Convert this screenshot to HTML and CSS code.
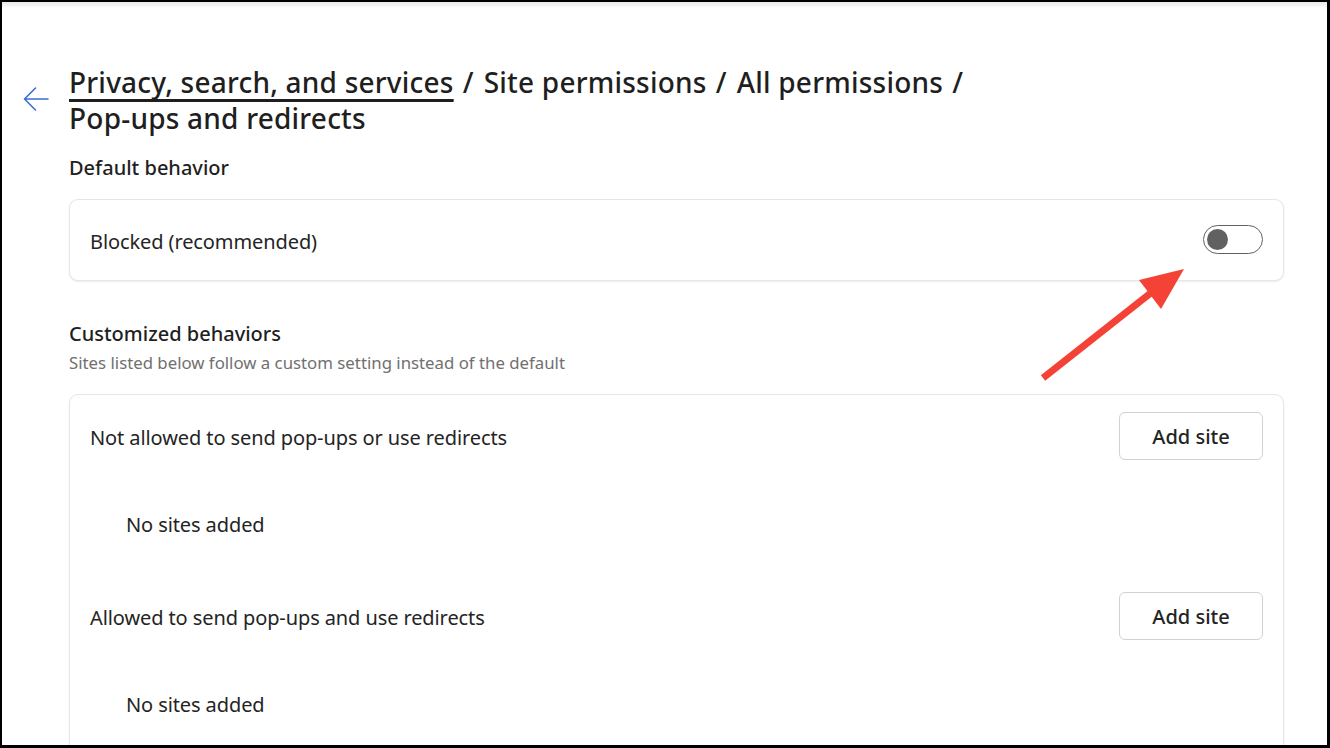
FILE: index.html
```html
<!DOCTYPE html>
<html lang="en">
<head>
<meta charset="utf-8">
<title>Pop-ups and redirects</title>
<link rel="stylesheet" href="styles.css">
</head>
<body>
<div class="frame">
  <div class="topband"></div>
  <div class="main">
    <div class="back-col">
      <svg class="back" width="28" height="26" viewBox="0 0 28 26" aria-hidden="true">
        <path d="M26 13 H2.5 M13.5 2 L2.5 13 L13.5 24" fill="none" stroke="#3b6fd6" stroke-width="1.6" stroke-linecap="round" stroke-linejoin="round"/>
      </svg>
    </div>
    <div class="content">
      <h1 class="crumbs"><span class="crumb-link">Privacy, search, and services</span><span class="sep">/</span>Site permissions<span class="sep">/</span>All permissions<span class="sep">/</span><br>Pop-ups and redirects</h1>

      <h2 class="section-title first">Default behavior</h2>
      <div class="card card-default">
        <span class="row-label">Blocked (recommended)</span>
        <span class="toggle"><span class="knob"></span></span>
      </div>

      <h2 class="section-title second">Customized behaviors</h2>
      <p class="section-sub">Sites listed below follow a custom setting instead of the default</p>
      <div class="card card-list">
        <div class="list-head">
          <span class="row-label">Not allowed to send pop-ups or use redirects</span>
          <button class="add-btn">Add site</button>
        </div>
        <div class="empty">No sites added</div>
        <div class="list-head">
          <span class="row-label">Allowed to send pop-ups and use redirects</span>
          <button class="add-btn">Add site</button>
        </div>
        <div class="empty">No sites added</div>
      </div>
    </div>
  </div>
  <svg class="annot" width="1330" height="748" viewBox="0 0 1330 748" aria-hidden="true">
    <line x1="1043" y1="378" x2="1152" y2="292" stroke="#f44336" stroke-width="7"/>
    <polygon points="1184,269 1139,280 1161,309" fill="#f44336"/>
  </svg>
</div>
</body>
</html>
```

FILE: styles.css
```css
* { box-sizing: border-box; }
html, body { margin: 0; padding: 0; background: #000; }
body {
  font-family: "Noto Sans", "Open Sans", sans-serif;
  color: #1f1f1f;
}
.frame {
  position: relative;
  width: 1330px;
  height: 748px;
  border-style: solid;
  border-color: #000;
  border-width: 2px 3px 3px 2px;
  background: #fff;
  overflow: hidden;
}
.topband {
  height: 6px;
  background: linear-gradient(#e9e9e9, #f6f6f6 70%, #fff);
}
.main {
  display: grid;
  grid-template-columns: 67px 1fr;
  padding-right: 43px;
}
.back-col {
  padding-top: 78px;
  padding-left: 20px;
}
.back { display: block; }
.content { min-width: 0; }
.crumbs {
  margin: 56px 0 0;
  font-size: 28px;
  line-height: 36px;
  font-weight: 500;
  letter-spacing: 0.22px;
  color: #1f1f1f;
}
.crumb-link {
  text-decoration: underline;
  text-decoration-thickness: 2.5px;
  text-underline-offset: 6px;
  text-decoration-skip-ink: none;
}
.sep {
  display: inline-block;
  margin: 0 10px 0 9px;
}
.section-title {
  margin: 0;
  font-size: 20px;
  line-height: 28px;
  font-weight: 500;
  color: #1f1f1f;
}
.section-title.first { margin-top: 18px; }
.section-title.second { margin-top: 39px; }
.section-sub {
  margin: 4px 0 0;
  font-size: 16.8px;
  line-height: 22px;
  color: #707070;
}
.card {
  border: 1px solid #e6e6e6;
  border-radius: 9px;
  background: #fff;
  box-shadow: 0 1px 2px rgba(0,0,0,0.08);
}
.card-default {
  margin-top: 17px;
  height: 82px;
  display: flex;
  align-items: center;
  justify-content: space-between;
  padding: 0 20px;
}
.row-label {
  font-size: 20px;
  line-height: 28px;
  letter-spacing: -0.1px;
  color: #242424;
}
.card-default .row-label { margin-top: 3px; }
.toggle {
  width: 60px;
  height: 29px;
  border: 1px solid #616161;
  border-radius: 15px;
  display: flex;
  align-items: center;
  padding-left: 3px;
  margin-top: -1px;
}
.knob {
  width: 21px;
  height: 21px;
  border-radius: 50%;
  background: #616161;
}
.card-list {
  margin-top: 20px;
  padding: 17px 20px 0;
  height: 400px;
}
.list-head {
  display: flex;
  align-items: center;
  justify-content: space-between;
}
.list-head .row-label { margin-top: 3px; }
.add-btn {
  width: 144px;
  height: 48px;
  border: 1px solid #d1d1d1;
  border-radius: 6px;
  background: #fff;
  font-family: inherit;
  font-size: 20px;
  font-weight: 500;
  color: #242424;
  padding: 0;
}
.empty {
  height: 132px;
  display: flex;
  align-items: center;
  padding: 0 0 4px 36px;
  font-size: 20px;
  letter-spacing: -0.1px;
  color: #242424;
}
.annot {
  position: absolute;
  left: -2px;
  top: -2px;
  pointer-events: none;
}
```
